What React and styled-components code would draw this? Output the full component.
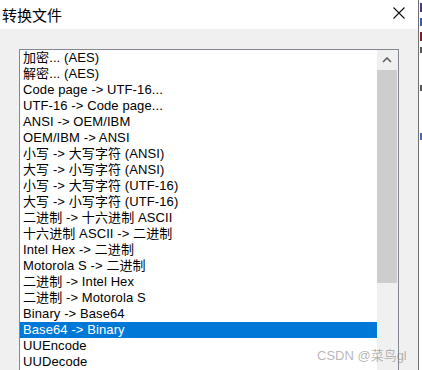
import React from 'react';
import styled, {createGlobalStyle} from 'styled-components';

const GlobalStyle = createGlobalStyle`
  html, body {
    margin: 0;
    padding: 0;
    overflow: hidden;
    background: #ffffff;
  }
`

const Screen = styled.div`
  width: 422px;
  height: 370px;
  display: flex;
  overflow: hidden;
  font-family: "Liberation Sans", "Noto Sans CJK SC", sans-serif;
`

const Dialog = styled.div`
  width: 418px;
  flex: none;
  display: flex;
  flex-direction: column;
  border-right: 1px solid #6f6f6f;
`

const TitleBar = styled.div`
  height: 29px;
  flex: none;
  background: #ffffff;
  display: flex;
  align-items: center;
  justify-content: space-between;
  padding: 0 13px 0 2px;
`

const Title = styled.span`
  font-size: 15px;
  color: #000;
  font-family: "Noto Sans CJK SC", sans-serif;
  padding-bottom: 1px;
`

const CloseButton = styled.div`
  width: 12px;
  height: 12px;
  display: flex;
  margin-bottom: 3px;

  svg {
    width: 12px;
    height: 12px;
  }
`

const Body = styled.div`
  flex: 1;
  background: #f0f0f0;
  padding: 20px 0 0 19px;
  overflow: hidden;
`

const ListBox = styled.div`
  width: 378px;
  height: 340px;
  background: #ffffff;
  border: 1px solid #828790;
  display: flex;
`

const Items = styled.ul`
  flex: 1;
  margin: 0;
  padding: 0;
  list-style: none;
`

const Item = styled.li`
  height: 16px;
  line-height: 16px;
  padding-left: 3px;
  font-size: 13px;
  letter-spacing: 0.1px;
  white-space: nowrap;
  color: ${p => (p.$selected ? '#ffffff' : '#000000')};
  background: ${p => (p.$selected ? '#0078d7' : 'transparent')};
`

const ScrollBar = styled.div`
  width: 21px;
  flex: none;
  background: #f0f0f0;
  display: flex;
  flex-direction: column;
`

const ScrollArrow = styled.div`
  height: 20px;
  display: flex;
  align-items: center;
  justify-content: center;
  padding-right: 1px;
`

const Thumb = styled.div`
  height: 213px;
  margin-right: 1px;
  background: #cdcdcd;
`

const Watermark = styled.div`
  position: absolute;
  left: 317px;
  top: 345px;
  font-size: 13px;
  color: rgba(120, 120, 120, 0.55);
  font-family: "Liberation Sans", "Noto Sans CJK SC", sans-serif;
  white-space: nowrap;
`

// strip of the window lying behind the dialog
const Behind = styled.div`
  flex: 1;
  background: #ffffff;
  display: flex;
  flex-direction: column;
  gap: 6px;
  padding-top: 3px;
`

const Mark = styled.div`
  width: 2px;
  height: ${p => p.$h}px;
  margin-left: 1px;
  background: ${p => p.$color};
`

const items = [
  '加密... (AES)',
  '解密... (AES)',
  'Code page -> UTF-16...',
  'UTF-16 -> Code page...',
  'ANSI -> OEM/IBM',
  'OEM/IBM -> ANSI',
  '小写 -> 大写字符 (ANSI)',
  '大写 -> 小写字符 (ANSI)',
  '小写 -> 大写字符 (UTF-16)',
  '大写 -> 小写字符 (UTF-16)',
  '二进制 -> 十六进制 ASCII',
  '十六进制 ASCII -> 二进制',
  'Intel Hex -> 二进制',
  'Motorola S -> 二进制',
  '二进制 -> Intel Hex',
  '二进制 -> Motorola S',
  'Binary -> Base64',
  'Base64 -> Binary',
  'UUEncode',
  'UUDecode',
]

const marks = [
  [9, '#4a3a7a'],
  [8, '#3a5ab0'],
  [9, '#7a1a2a'],
  [6, '#555'],
  [20, '#fff'],
  [6, '#555'],
  [30, '#fff'],
  [7, '#4a6ab0'],
]

export default () => (
  <Screen>
    <GlobalStyle />
    <Dialog>
      <TitleBar>
        <Title>转换文件</Title>
        <CloseButton>
          <svg viewBox="0 0 12 12">
            <path d="M0.5 0.5 L11.5 11.5 M11.5 0.5 L0.5 11.5" stroke="#111" strokeWidth="1.1" fill="none" />
          </svg>
        </CloseButton>
      </TitleBar>
      <Body>
        <ListBox>
          <Items>
            {items.map((text, i) => (
              <Item key={text} $selected={i === 17}>{text}</Item>
            ))}
          </Items>
          <ScrollBar>
            <ScrollArrow>
              <svg width="10" height="6" viewBox="0 0 10 6">
                <path d="M1 5 L5 1 L9 5" stroke="#606060" strokeWidth="1.6" fill="none" />
              </svg>
            </ScrollArrow>
            <Thumb />
          </ScrollBar>
        </ListBox>
      </Body>
    </Dialog>
    <Behind>
      {marks.map(([h, color], i) => (
        <Mark key={i} $h={h} $color={color} />
      ))}
    </Behind>
    <Watermark>CSDN @菜鸟gl</Watermark>
  </Screen>
)
